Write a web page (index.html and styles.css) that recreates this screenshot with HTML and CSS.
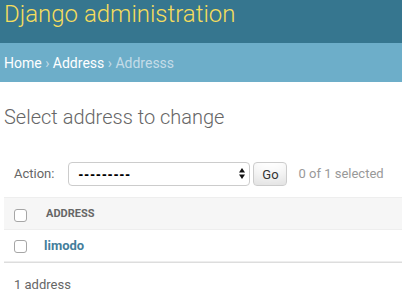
FILE: index.html
```html
<!DOCTYPE html>
<html lang="en">
<head>
    <meta charset="UTF-8">
    <meta name="viewport" content="width=device-width, initial-scale=1.0">
    <title>Select address to change | Django site admin</title>
    <link rel="stylesheet" href="styles.css">
</head>
<body>
    <div id="header">
        <h1 class="branding">Django administration</h1>
    </div>
    <div class="breadcrumbs">
        <a href="#">Home</a> &rsaquo; <a href="#">Address</a> &rsaquo; Addresss
    </div>

    <div id="content">
        <h1 class="title">Select address to change</h1>
        <form id="changelist-form">
            <div class="actions">
                <label for="action">Action:</label>
                <div class="select-wrap">
                    <select id="action" name="action">
                        <option value="" selected>---------</option>
                        <option value="delete_selected">Delete selected addresses</option>
                    </select>
                    <svg class="select-arrows" width="6" height="11" viewBox="0 0 6 11">
                        <path d="M0 4.6 L3 0 L6 4.6 Z" fill="#111"/>
                        <path d="M0 6.4 L6 6.4 L3 11 Z" fill="#111"/>
                    </svg>
                </div>
                <button type="button" class="go">Go</button>
                <span class="action-counter">0 of 1 selected</span>
            </div>

            <table class="results">
                <thead>
                    <tr>
                        <th class="action-checkbox-column"><input type="checkbox" class="check"></th>
                        <th class="column-address"><span>Address</span></th>
                    </tr>
                </thead>
                <tbody>
                    <tr>
                        <td class="action-checkbox"><input type="checkbox" class="check"></td>
                        <td class="field-address"><a href="#">limodo</a></td>
                    </tr>
                </tbody>
            </table>

            <p class="paginator">1 address</p>
        </form>
    </div>
</body>
</html>
```

FILE: styles.css
```css
body {
    margin: 0;
    font-family: Roboto, "Liberation Sans", sans-serif;
    color: #333;
    background: #fff;
}
a {
    text-decoration: none;
}

#header {
    background: #36768f;
    padding: 0 4px 15px;
}
.branding {
    margin: 0;
    font-size: 24px;
    line-height: 28px;
    font-weight: 300;
    color: #f5dd5d;
}

.breadcrumbs {
    background: #6daec9;
    padding: 12px 4px 10px;
    font-size: 14px;
    line-height: 17px;
    color: #c4dce8;
}
.breadcrumbs a {
    color: #fff;
}

#content {
    padding: 23px 0 0 4px;
}
.title {
    margin: 0 0 22px;
    font-size: 20px;
    line-height: 24px;
    font-weight: 300;
    color: #666;
}

.actions {
    display: flex;
    align-items: center;
    padding: 10px 10px 11px;
    line-height: 24px;
    color: #999;
    font-size: 13px;
}
.actions label {
    color: #666;
}
.select-wrap {
    position: relative;
    margin-left: 14px;
    width: 182px;
    height: 24px;
}
.select-wrap select {
    appearance: none;
    -webkit-appearance: none;
    box-sizing: border-box;
    width: 100%;
    height: 24px;
    margin: 0;
    padding: 0 0 0 9px;
    border: 1px solid #ccc;
    border-radius: 4px;
    background: #fff;
    color: #000;
    font-family: "Liberation Sans", Arial, sans-serif;
    font-size: 14px;
    font-weight: 700;
    letter-spacing: 1.2px;
}
.select-arrows {
    position: absolute;
    top: 6px;
    right: 5px;
}
.go {
    box-sizing: border-box;
    height: 24px;
    width: 34px;
    margin: 1px 0 0 3px;
    padding: 0;
    border: 1px solid #ccc;
    border-radius: 4px;
    background: #fff;
    box-shadow: 0 -15px 20px -10px rgba(0, 0, 0, 0.15) inset;
    color: #333;
    font-family: Roboto, "Liberation Sans", sans-serif;
    font-size: 13px;
    line-height: 1;
}
.action-counter {
    margin-left: 11px;
}

.results {
    width: 100%;
    border-collapse: collapse;
}
.results th,
.results td {
    padding: 0;
    text-align: left;
    vertical-align: top;
}
.results thead th {
    background: #f6f6f6;
    border-top: 1px solid #eee;
    border-bottom: 1px solid #eee;
    color: #666;
    font-size: 11px;
    font-weight: 700;
    text-transform: uppercase;
}
.results thead th span {
    display: block;
    padding: 8px 10px 7px;
    line-height: 16px;
}
.results .action-checkbox-column,
.results .action-checkbox {
    width: 32px;
}
.action-checkbox-column .check {
    margin: 11px auto 0;
}
.results tbody td {
    border-bottom: 1px solid #eee;
}
.results .action-checkbox .check {
    margin: 10px auto 0;
}
.field-address {
    padding: 8px 8px 7px !important;
    font-size: 13px;
    line-height: 16px;
}
.field-address a {
    color: #447e9b;
    font-weight: 700;
}
.check {
    appearance: none;
    -webkit-appearance: none;
    display: block;
    box-sizing: border-box;
    width: 13px;
    height: 13px;
    border: 1px solid #a6a6a6;
    border-radius: 3px;
    background: #fff;
}

.paginator {
    margin: 0;
    padding: 11px 10px;
    border-top: 1px solid #ddd;
    border-bottom: 1px solid #eee;
    font-size: 13px;
    line-height: 22px;
    color: #666;
}
```
